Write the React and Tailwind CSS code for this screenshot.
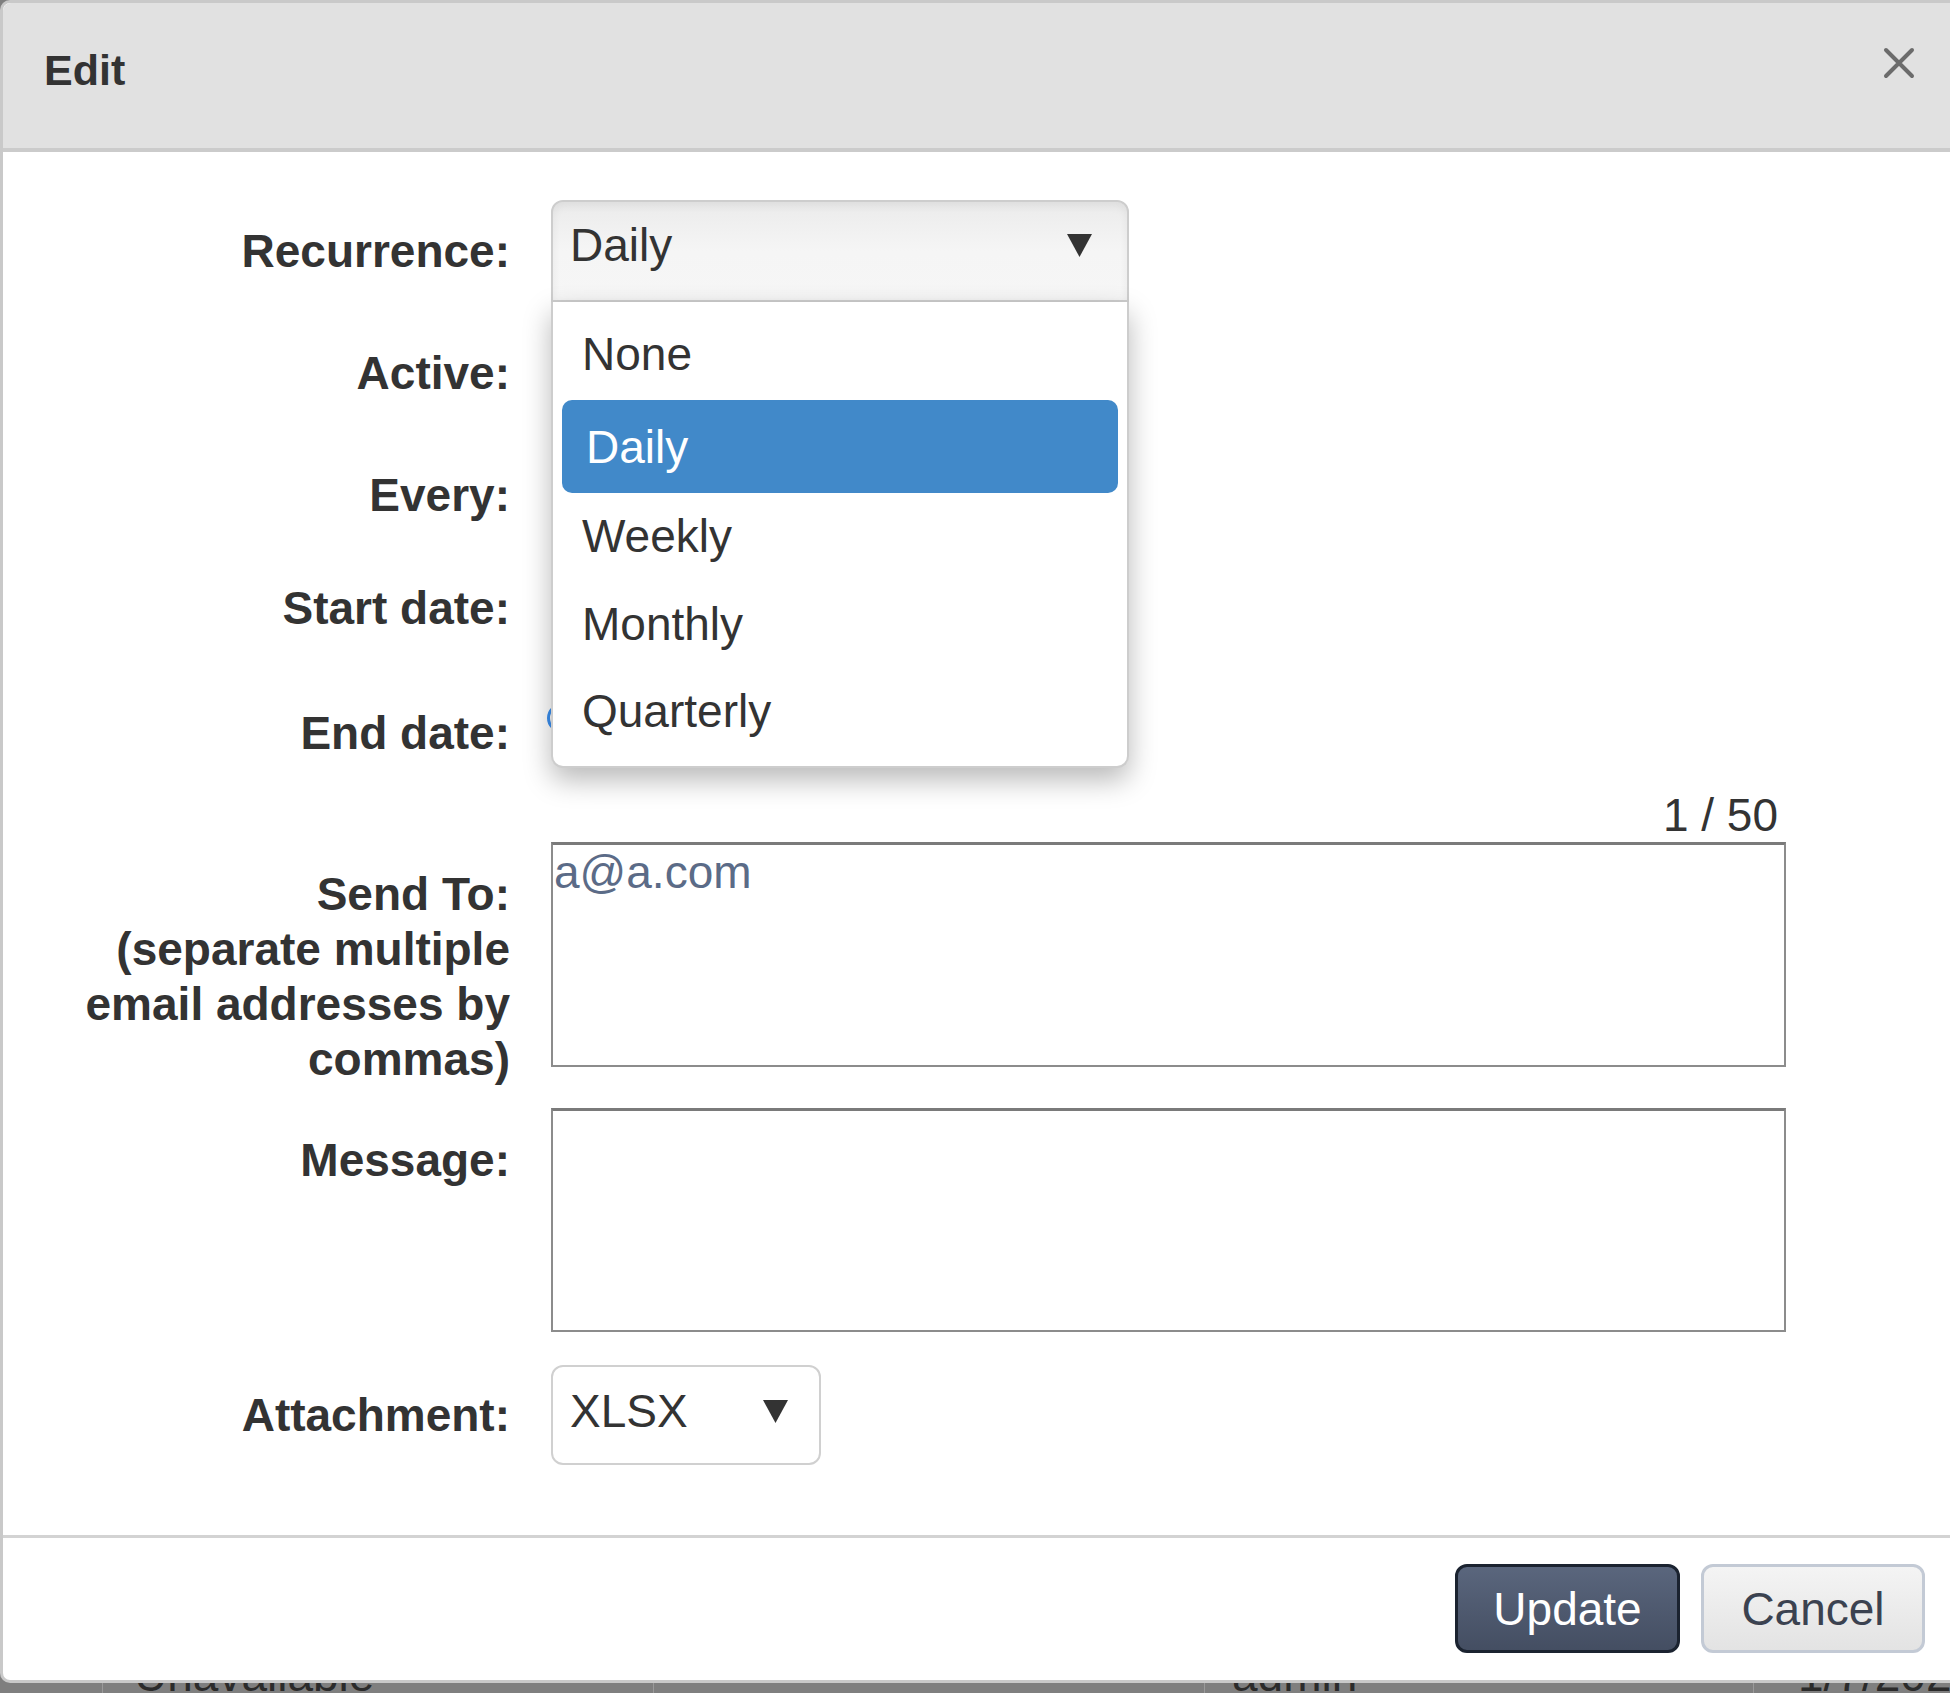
import React from "react";

const Caret = () => (
  <svg width="25" height="23" viewBox="0 0 25 23" className="shrink-0">
    <polygon points="0,0 25,0 12.5,23" fill="#333" />
  </svg>
);

const Label = ({ children, className = "" }) => (
  <div
    className={`w-[507px] shrink-0 text-right text-[46px] font-bold leading-[55px] text-[#333] ${className}`}
  >
    {children}
  </div>
);

const options = [
  { name: "None", h: "h-[92px]" },
  { name: "Daily", h: "h-[93px]", active: true },
  { name: "Weekly", h: "h-[86px]" },
  { name: "Monthly", h: "h-[90px]" },
  { name: "Quarterly", h: "h-[84px]" },
];

const App = () => {
  return (
    <div className="w-[1950px] h-[1693px] overflow-hidden bg-[#7f7f7f] font-['Liberation_Sans',Arial,sans-serif]">
      {/* dialog */}
      <div className="relative z-10 w-[1950px] bg-white border-l-[3px] border-t-[3px] border-b-[3px] border-[#c9c9c9] rounded-tl-[10px] rounded-bl-[10px]">
        <div className="h-[149px] bg-[#e1e1e1] border-b-[4px] border-[#cbcbcb] rounded-tl-[8px] flex justify-between items-start pl-[41px] pr-[35px]">
          <h2 className="mt-[46px] text-[43px] font-bold leading-none text-[#333]">Edit</h2>
          <svg width="32" height="32" viewBox="0 0 32 32" className="mt-[44px]">
            <path d="M3 3 L29 29 M29 3 L3 29" stroke="#6b6b6b" strokeWidth="4" strokeLinecap="round" />
          </svg>
        </div>

        <div className="pt-[48px]">
          {/* Recurrence */}
          <div className="flex items-center gap-[41px] h-[102px]">
            <Label>Recurrence:</Label>
            <div className="relative z-20 w-[578px] h-[102px]">
              <div className="h-full flex items-center justify-between pl-[17px] pr-[35px] pb-[12px] border-2 border-[#cdcdcd] rounded-t-[12px] bg-linear-to-b from-[#ebebeb] via-[#f5f5f5] to-[#f6f6f6] shadow-[inset_0_4px_8px_rgba(0,0,0,0.06)]">
                <span className="text-[46px] leading-none text-[#333]">Daily</span>
                <Caret />
              </div>
              <div className="absolute left-0 top-full w-[578px] h-[466px] bg-white border-2 border-t-0 border-[#cdcdcd] rounded-b-[12px] shadow-[0_12px_28px_rgba(0,0,0,0.28)] pt-[6px] px-[9px]">
                {options.map((o) => (
                  <div
                    key={o.name}
                    className={`${o.h} flex items-center text-[46px] leading-none ${
                      o.active
                        ? "bg-[#4189c9] text-white rounded-[10px] pl-[24px]"
                        : "text-[#333] pl-[20px]"
                    }`}
                  >
                    {o.name}
                  </div>
                ))}
              </div>
            </div>
          </div>

          <div className="flex items-center gap-[41px] h-[142px]">
            <Label>Active:</Label>
          </div>
          <div className="flex items-center gap-[41px] h-[102px]">
            <Label>Every:</Label>
          </div>
          <div className="flex items-center gap-[41px] h-[124px]">
            <Label>Start date:</Label>
          </div>
          <div className="flex items-center gap-[41px] h-[126px]">
            <Label>End date:</Label>
            <div className="-ml-[4px] mb-[30px] w-[30px] h-[30px] rounded-full border-[3px] border-[#3a8ff0]" />
          </div>

          {/* counter */}
          <div className="flex items-center h-[38px] pl-[548px]">
            <div className="w-[1235px] text-right pr-[8px] text-[46px] leading-none text-[#333]">1 / 50</div>
          </div>

          {/* Send To */}
          <div className="flex items-start gap-[41px] mt-[8px] h-[225px]">
            <Label className="pt-[25px]">
              Send To:
              <br />
              (separate multiple
              <br />
              email addresses by
              <br />
              commas)
            </Label>
            <div className="w-[1235px] h-[225px] border-2 border-[#8c8c8c] border-t-[3px] border-t-[#7a7a7a] px-[1px] pt-[4px]">
              <span className="text-[46px] leading-none text-[#5b6b87]">a@a.com</span>
            </div>
          </div>

          {/* Message */}
          <div className="flex items-start gap-[41px] mt-[41px]">
            <Label className="pt-[25px]">Message:</Label>
            <div className="w-[1235px] h-[224px] border-2 border-[#8c8c8c] border-t-[3px] border-t-[#7a7a7a]" />
          </div>

          {/* Attachment */}
          <div className="flex items-center gap-[41px] h-[100px] mt-[33px]">
            <Label>Attachment:</Label>
            <div className="w-[270px] h-[100px] flex items-center justify-between pl-[17px] pr-[31px] pb-[8px] border-2 border-[#d0d0d0] rounded-[12px] bg-white">
              <span className="text-[46px] leading-none text-[#333]">XLSX</span>
              <Caret />
            </div>
          </div>
        </div>

        {/* footer */}
        <div className="mt-[70px] border-t-[3px] border-[#d3d3d3] flex justify-end gap-[21px] pr-[25px] pt-[26px] pb-[27px]">
          <button className="w-[225px] h-[89px] rounded-[12px] border-[3px] border-[#1b2330] bg-linear-to-b from-[#5a667d] to-[#444e62] text-white text-[46px] leading-none">
            Update
          </button>
          <button className="w-[224px] h-[89px] rounded-[12px] border-[3px] border-[#c3cad5] bg-linear-to-b from-[#f4f4f4] to-[#e3e3e3] text-[#3b4250] text-[46px] leading-none">
            Cancel
          </button>
        </div>
      </div>

      {/* table row behind the overlay */}
      <div className="h-[10px] overflow-hidden flex text-[46px] leading-none text-[#2b2b2b]">
        <div className="w-[102px] shrink-0" />
        <div className="w-[551px] shrink-0 border-l border-[#9a9a9a] pl-[31px]">
          <div className="-mt-[31px]">Unavailable</div>
        </div>
        <div className="w-[551px] shrink-0 border-l border-[#9a9a9a]" />
        <div className="w-[549px] shrink-0 border-l border-[#9a9a9a] pl-[27px]">
          <div className="-mt-[31px]">admin</div>
        </div>
        <div className="flex-1 border-l border-[#9a9a9a] pl-[44px]">
          <div className="-mt-[31px]">1/7/2020</div>
        </div>
      </div>
    </div>
  );
};

export default App;
